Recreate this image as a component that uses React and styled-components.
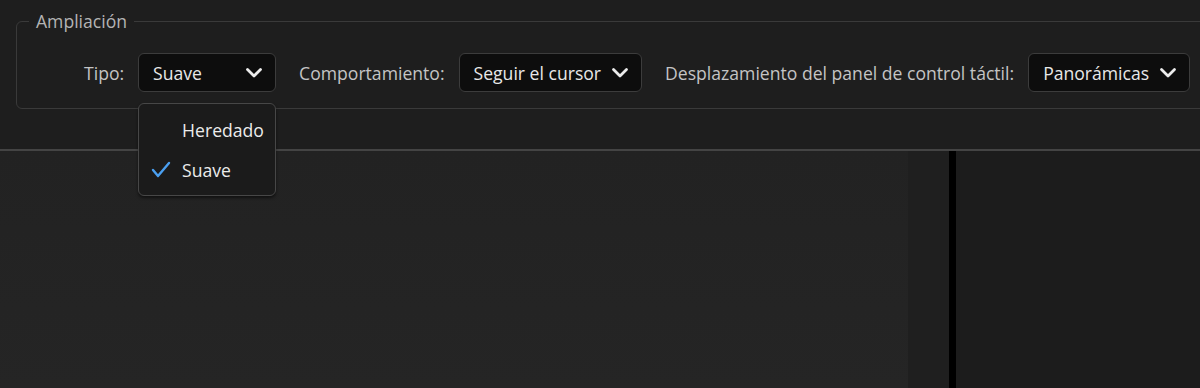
import React from "react";
import styled, { createGlobalStyle } from "styled-components";

const Global = createGlobalStyle`
  html, body {
    margin: 0;
    background: #1e1e1e;
    font-family: "Open Sans", "Noto Sans", sans-serif;
    overflow: hidden;
  }
`;

const Page = styled.div`
  width: 1200px;
  height: 388px;
  display: flex;
  flex-direction: column;
  overflow: hidden;
`;

const Top = styled.div`
  height: 149px;
  padding: 10px 0 0 16px;
  box-sizing: border-box;
  background: #1e1e1e;
`;

const Group = styled.fieldset`
  margin: 0 -20px 0 0;
  padding: 21px 0 16px 0;
  border: 1px solid #3a3a3a;
  border-radius: 6px;
  min-width: 0;
`;

const Legend = styled.legend`
  margin-left: 12px;
  padding: 0 7px;
  font-size: 17.6px;
  line-height: 22px;
  color: #b4b4b4;
`;

const Row = styled.div`
  display: flex;
  align-items: center;
  gap: 23px;
  padding-left: 67px;
`;

const Field = styled.div`
  display: flex;
  align-items: center;
  gap: 14px;
`;

const Label = styled.span`
  font-size: 17.6px;
  color: #c4c4c4;
  white-space: nowrap;
`;

const SelectWrap = styled.div`
  position: relative;
`;

const Select = styled.div`
  height: 39px;
  box-sizing: border-box;
  ${(p) => (p.$width ? `width: ${p.$width}px;` : "")}
  padding: 0 12px 0 14px;
  display: flex;
  align-items: center;
  justify-content: space-between;
  gap: 10px;
  background: #0d0d0d;
  border: 1px solid #3c3c3c;
  border-radius: 6px;
  font-size: 17.6px;
  color: #e8e8e8;
  white-space: nowrap;
`;

const Menu = styled.div`
  position: absolute;
  top: calc(100% + 11px);
  left: 0;
  width: 138px;
  height: 93px;
  box-sizing: border-box;
  padding-top: 6px;
  background: #1b1b1b;
  border: 1px solid #474747;
  border-radius: 6px;
  box-shadow: 0 2px 3px rgba(0, 0, 0, 0.5);
  z-index: 2;
`;

const Item = styled.div`
  height: 40px;
  display: flex;
  align-items: center;
  padding-left: 12px;
  gap: 11px;
  font-size: 17.6px;
  color: #ececec;
`;

const CheckSlot = styled.span`
  width: 20px;
  height: 20px;
  display: flex;
  align-items: center;
  justify-content: center;
`;

const Bottom = styled.div`
  flex: 1;
  display: flex;
  border-top: 2px solid #444;
`;

const Main = styled.div`
  flex: 1;
  background: linear-gradient(180deg, #222 0%, #252525 100%);
`;

const Side = styled.div`
  width: 41px;
  background: #1f1f1f;
`;

const Divider = styled.div`
  width: 7px;
  background: #000;
`;

const Right = styled.div`
  width: 244px;
  background: #1c1c1c;
`;

const Chevron = () => (
  <svg width="18" height="12" viewBox="0 0 18 12">
    <polyline points="2.5,2.5 9,9 15.5,2.5" fill="none" stroke="#ececec" strokeWidth="2.8" strokeLinecap="round" strokeLinejoin="round" />
  </svg>
);

const Check = () => (
  <svg width="20" height="18" viewBox="0 0 20 18">
    <polyline points="2,9 7,15 18,2" fill="none" stroke="#4a9ff0" strokeWidth="2.4" strokeLinecap="round" strokeLinejoin="round" />
  </svg>
);

export default function App() {
  return (
    <Page>
      <Global />
      <Top>
        <Group>
          <Legend>Ampliación</Legend>
          <Row>
            <Field>
              <Label>Tipo:</Label>
              <SelectWrap>
                <Select $width={138}>
                  Suave
                  <Chevron />
                </Select>
                <Menu>
                  <Item>
                    <CheckSlot />
                    Heredado
                  </Item>
                  <Item>
                    <CheckSlot>
                      <Check />
                    </CheckSlot>
                    Suave
                  </Item>
                </Menu>
              </SelectWrap>
            </Field>
            <Field>
              <Label>Comportamiento:</Label>
              <Select>
                Seguir el cursor
                <Chevron />
              </Select>
            </Field>
            <Field>
              <Label>Desplazamiento del panel de control táctil:</Label>
              <Select>
                Panorámicas
                <Chevron />
              </Select>
            </Field>
          </Row>
        </Group>
      </Top>
      <Bottom>
        <Main />
        <Side />
        <Divider />
        <Right />
      </Bottom>
    </Page>
  );
}
